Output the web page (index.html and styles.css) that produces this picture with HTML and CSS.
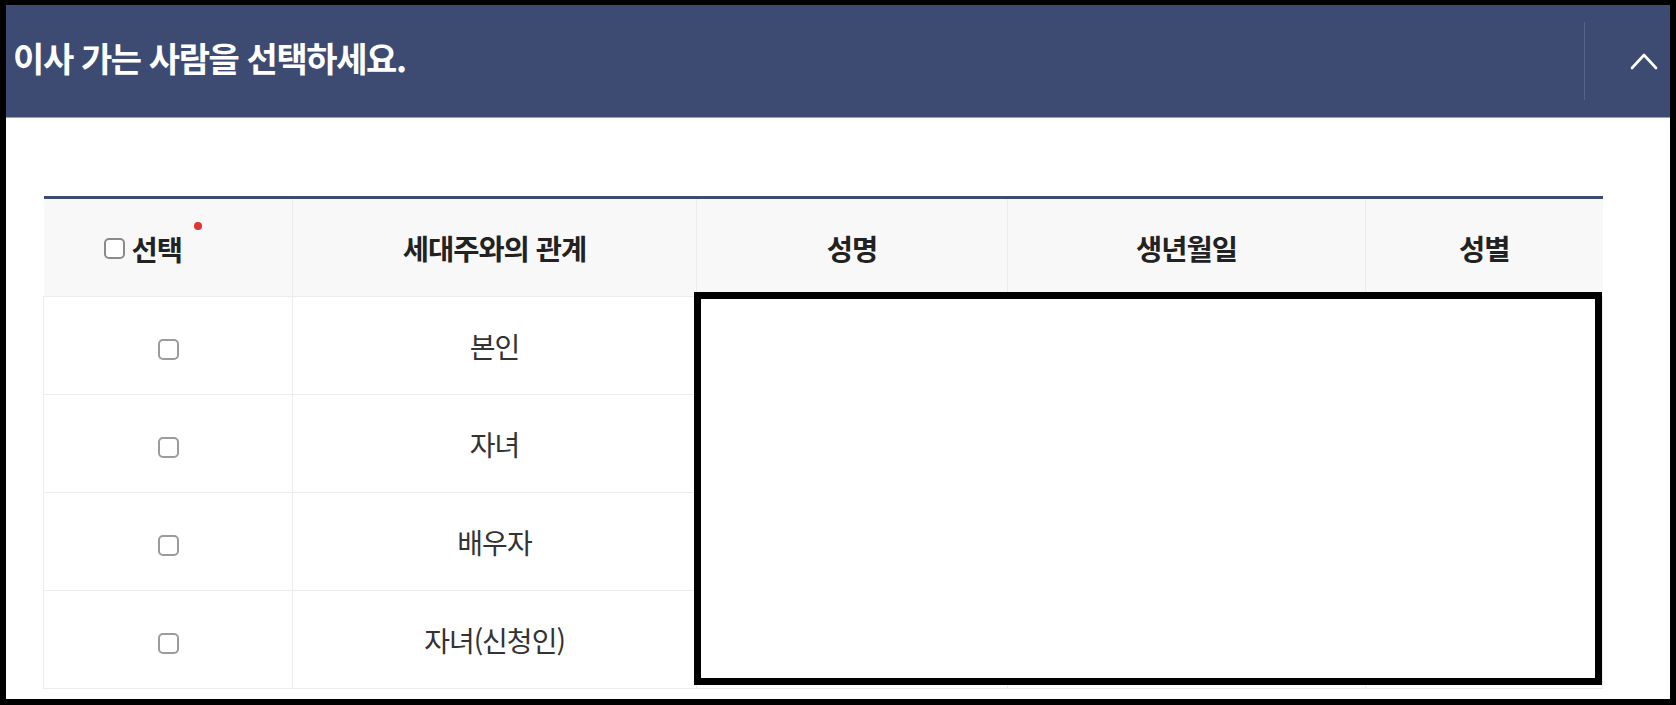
FILE: index.html
```html
<!DOCTYPE html>
<html lang="ko">
<head>
<meta charset="UTF-8" />
<meta name="viewport" content="width=device-width, initial-scale=1" />
<title>전입신고 - 이사 가는 사람 선택</title>
<link rel="stylesheet" href="styles.css">
</head>
<body>

<div class="frame">
  <section class="panel">
    <header class="panel-head">
      <h2 class="panel-title">이사 가는 사람을 선택하세요.</h2>
      <button class="panel-toggle" type="button" aria-label="접기">
        <svg width="28" height="18" viewBox="0 0 28 18" aria-hidden="true">
          <polyline points="2,16 14,3 26,16" fill="none" stroke="#fff" stroke-width="2.6" stroke-linecap="round" stroke-linejoin="round" />
        </svg>
      </button>
    </header>

    <div class="panel-body">
      <div class="table-wrap">
        <table class="member-table" aria-label="세대원 목록">
          <colgroup>
            <col class="col-check">
            <col class="col-rel">
            <col class="col-name">
            <col class="col-birth">
            <col class="col-sex">
          </colgroup>
          <thead>
            <tr>
              <th>
                <label class="check-all">
                  <input type="checkbox" class="chk chk-head" id="checkAll">
                  <span>선택</span>
                  <i class="required" aria-label="필수"></i>
                </label>
              </th>
              <th>세대주와의 관계</th>
              <th>성명</th>
              <th>생년월일</th>
              <th>성별</th>
            </tr>
          </thead>
          <tbody>
            <tr>
              <td><input type="checkbox" class="chk"></td>
              <td>본인</td>
              <td></td>
              <td></td>
              <td></td>
            </tr>
            <tr>
              <td><input type="checkbox" class="chk"></td>
              <td>자녀</td>
              <td></td>
              <td></td>
              <td></td>
            </tr>
            <tr>
              <td><input type="checkbox" class="chk"></td>
              <td>배우자</td>
              <td></td>
              <td></td>
              <td></td>
            </tr>
            <tr>
              <td><input type="checkbox" class="chk"></td>
              <td>자녀(신청인)</td>
              <td></td>
              <td></td>
              <td></td>
            </tr>
          </tbody>
        </table>
        <!-- personal data masked -->
        <div class="mask-box"></div>
      </div>
    </div>
  </section>
</div>

</body>
</html>
```

FILE: styles.css
```css
html, body {
  margin: 0;
  padding: 0;
  background: #fff;
}
body {
  font-family: "Noto Sans CJK KR", "Noto Sans", sans-serif;
  color: #333;
}
.frame {
  width: 1676px;
  height: 705px;
  box-sizing: border-box;
  border: 6px solid #000;
  border-top-width: 5px;
  overflow: hidden;
  background: #fff;
}
.panel-head {
  height: 112px;
  background: #3d4b72;
  border-bottom: 1px solid #98a2bf;
  display: flex;
  align-items: center;
  justify-content: space-between;
}
.panel-title {
  margin: 0 0 6px 7px;
  color: #fff;
  font-size: 34px;
  font-weight: 700;
  letter-spacing: -1.4px;
  line-height: 1;
}
.panel-toggle {
  height: 78px;
  width: 86px;
  background: none;
  border: none;
  border-left: 1px solid #56638a;
  padding: 0 0 0 32px;
  display: flex;
  align-items: center;
  justify-content: center;
  cursor: pointer;
}
.panel-body {
  padding: 78px 0 0 37px;
}
.table-wrap {
  position: relative;
  width: 1559px;
}
.member-table {
  width: 100%;
  border-collapse: collapse;
  table-layout: fixed;
  border-top: 3px solid #3d4b72;
}
.col-check { width: 249px; }
.col-rel { width: 404px; }
.col-name { width: 311px; }
.col-birth { width: 358px; }
.col-sex { width: 237px; }
.member-table th {
  height: 97px;
  background: #f8f8f8;
  font-size: 28.5px;
  font-weight: 700;
  color: #222;
  letter-spacing: -1px;
  border-left: 1px solid #ececec;
  padding: 0;
}
.member-table th:first-child {
  border-left: none;
}
.member-table td {
  height: 97px;
  text-align: center;
  font-size: 28px;
  color: #333;
  letter-spacing: -1px;
  border: 1px solid #ececec;
  padding: 0;
}
.check-all {
  display: inline-flex;
  align-items: center;
  gap: 7px;
  margin-left: -50px;
  position: relative;
}
.chk {
  appearance: none;
  -webkit-appearance: none;
  width: 21px;
  height: 21px;
  margin: 0;
  border: 2px solid #9b9b9b;
  border-radius: 5px;
  background: #fff;
  box-sizing: border-box;
  vertical-align: middle;
  cursor: pointer;
}
.chk-head {
  width: 21px;
  height: 21px;
  border-color: #8a8a8a;
}
.required {
  position: absolute;
  right: -20px;
  top: -6px;
  width: 8px;
  height: 8px;
  border-radius: 50%;
  background: #e0352f;
}
.mask-box {
  position: absolute;
  left: 651px;
  top: 96px;
  width: 908px;
  height: 393px;
  box-sizing: border-box;
  border: 7px solid #000;
  background: #fff;
}
```
